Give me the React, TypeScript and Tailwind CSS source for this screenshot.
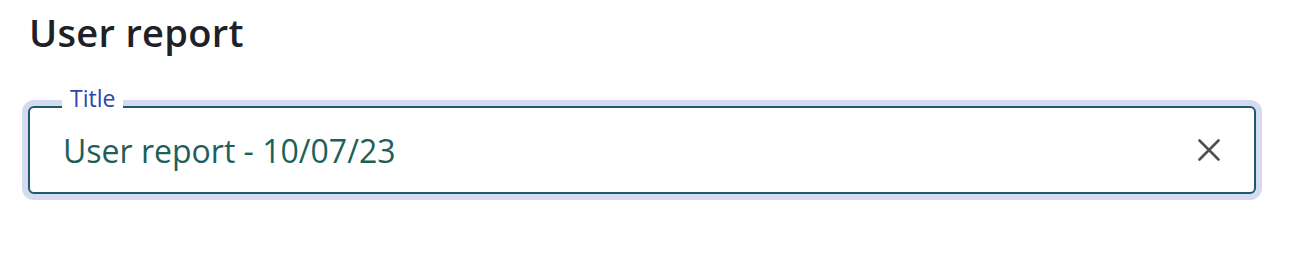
import React from "react";

export default function App() {
  return (
    <div className="w-[1290px] h-[254px] bg-white font-['Open_Sans',sans-serif]">
      <h1 className="pl-[29px] pt-[10px] text-[38px] leading-[44px] font-semibold tracking-[0.3px] text-[#202126]">
        User report
      </h1>
      <div className="ml-[28px] mt-[52px] w-[1228px] h-[88px] relative rounded-md border-2 border-[#1d5a6a] shadow-[0_0_0_6px_#d4daef] bg-white flex items-center pl-[33px] pr-[33px]">
        <span className="absolute left-[32px] top-[-21px] px-2 bg-white text-[23px] leading-[23px] text-[#2c44b0]">
          Title
        </span>
        <span className="flex-1 pt-[2px] text-[32px] leading-[40px] text-[#1e5f5a]">
          User report - 10/07/23
        </span>
        <svg width="24" height="24" viewBox="0 0 24 24" fill="none" stroke="#505050" strokeWidth="2.6" strokeLinecap="round">
          <path d="M2.5 2.5L21.5 21.5M21.5 2.5L2.5 21.5" />
        </svg>
      </div>
    </div>
  );
}
